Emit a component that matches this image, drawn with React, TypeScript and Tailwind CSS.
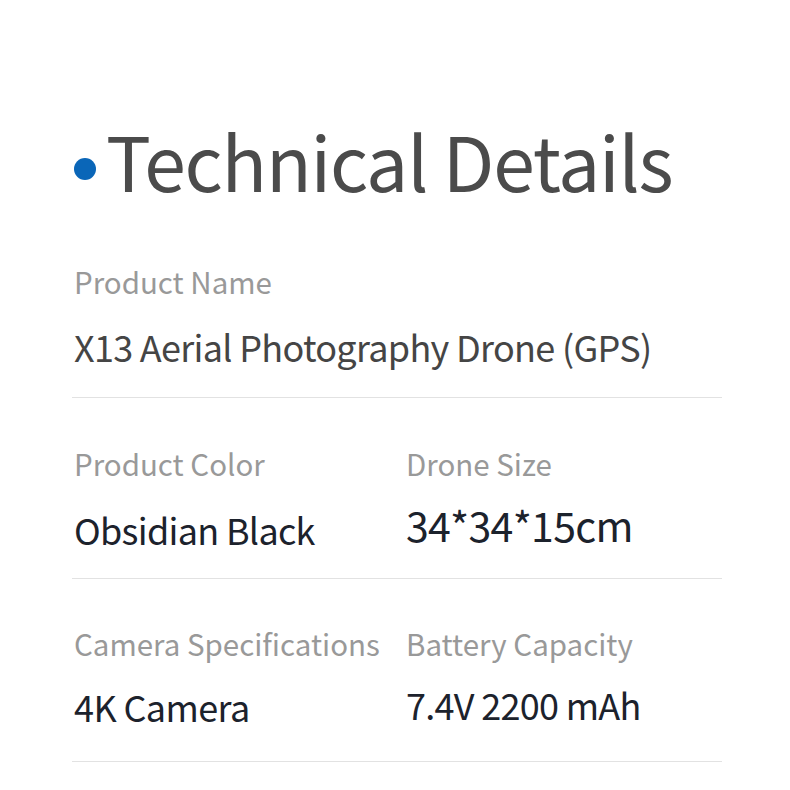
import React from "react";

export default function App() {
  return (
    <div
      className="w-[790px] h-[790px] bg-white overflow-hidden"
      style={{ fontFamily: '"Noto Sans CJK SC", "Noto Sans", sans-serif' }}
    >
      <div className="pl-[72px] w-[722px]">
        {/* Title */}
        <div className="flex items-start pt-[120px]">
          <div className="mt-[38px] ml-[2px] w-[22px] h-[22px] rounded-full bg-[#0a66b8] shrink-0" />
          <h1 className="ml-[10px] text-[75px] leading-[80px] h-[80px] tracking-[-1.2px] text-[#4b4b4b] font-normal whitespace-nowrap">
            Technical Details
          </h1>
        </div>

        {/* Row 1 */}
        <div className="pl-[2px] pt-[66px]">
          <div className="text-[29.5px] leading-[30px] h-[30px] text-[#999999] whitespace-nowrap">Product Name</div>
          <div className="mt-[28px] text-[36px] leading-[44px] h-[44px] tracking-[-0.7px] text-[#454545] whitespace-nowrap">
            X13 Aerial Photography Drone (GPS)
          </div>
        </div>
        <div className="mt-[29px] h-px bg-[#e2e2e2]" />

        {/* Row 2 */}
        <div className="flex pl-[2px] pt-[50px] h-[180px]">
          <div className="w-[332px]">
            <div className="text-[29.5px] leading-[30px] h-[30px] text-[#999999] whitespace-nowrap">Product Color</div>
            <div className="mt-[29px] text-[36px] leading-[44px] h-[44px] tracking-[-0.7px] text-[#1c222c] whitespace-nowrap">Obsidian Black</div>
          </div>
          <div>
            <div className="text-[29.5px] leading-[30px] h-[30px] text-[#999999] whitespace-nowrap">Drone Size</div>
            <div className="mt-[24px] text-[41px] leading-[44px] h-[44px] tracking-[-0.7px] text-[#1c222c] whitespace-nowrap">34*34*15cm</div>
          </div>
        </div>
        <div className="h-px bg-[#e2e2e2]" />

        {/* Row 3 */}
        <div className="flex pl-[2px] pt-[49px] h-[182px]">
          <div className="w-[332px]">
            <div className="text-[29.5px] leading-[30px] h-[30px] text-[#999999] whitespace-nowrap">Camera Specifications</div>
            <div className="mt-[26px] text-[36px] leading-[44px] h-[44px] tracking-[-0.6px] text-[#1c222c] whitespace-nowrap">4K Camera</div>
          </div>
          <div>
            <div className="text-[29.5px] leading-[30px] h-[30px] text-[#999999] whitespace-nowrap">Battery Capacity</div>
            <div className="mt-[24px] text-[36px] leading-[44px] h-[44px] tracking-[-0.7px] text-[#1c222c] whitespace-nowrap">7.4V 2200 mAh</div>
          </div>
        </div>
        <div className="h-px bg-[#e2e2e2]" />
      </div>
    </div>
  );
}
